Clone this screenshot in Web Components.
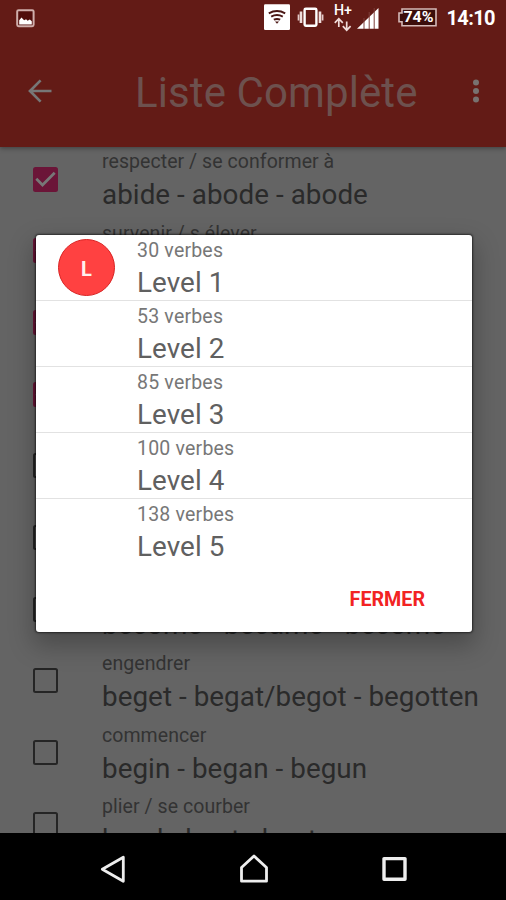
<!DOCTYPE html>
<html lang="fr">
<head>
<meta charset="utf-8">
<title>Liste Complète</title>
<style>
html,body{margin:0;height:900px;overflow:hidden;background:#000;font-family:Roboto,"Liberation Sans",sans-serif}
</style>
</head>
<body>
<verb-app></verb-app>
<script>
const define = (name, html, after) => {
  const t = document.createElement('template');
  t.innerHTML = html;
  customElements.define(name, class extends HTMLElement {
    constructor() {
      super();
      this.attachShadow({mode: 'open'}).append(t.content.cloneNode(true));
    }
    connectedCallback() { if (after) after(this, this.shadowRoot); }
  });
};

define('status-bar', `
<style>
:host{display:flex;height:36px;box-sizing:border-box;padding:0 9px 0 16px;color:#fff;align-items:center}
svg{display:block;flex:none}
.fill{flex:1}
</style>
<svg width="19" height="19" viewBox="0 0 19 19"><rect x="1.2" y="1.2" width="16.4" height="16" rx="1.4" fill="#500d0b" stroke="#cfaeab" stroke-width="2"/><path d="M3.200 15.500v-4.300l2.300-2.600 2.600 2.600 2-1 1.500 1.500 2.200-1.200 2 1.800v3.200z" fill="#fff"/></svg>
<span class="fill"></span>
<svg width="233" height="36" viewBox="264 0 233 36">
<rect x="264" y="4.300" width="26" height="25.700" rx="1.200" fill="#fff"/>
<g fill="none" stroke="#4a1714" stroke-width="2"><path d="M268.800 13.300Q277 8.800 285.200 13.300"/><path d="M271.200 16.600Q277 13.600 282.800 16.600"/><path d="M273.800 19.700Q277 18.200 280.200 19.700"/></g><path d="M275 21.500h4l-2 2.300z" fill="#4a1714"/>
<rect x="304.600" y="8.800" width="11.800" height="17" rx="1.200" fill="none" stroke="#fff" stroke-width="2.400"/>
<path d="M301 11.500v11.500M320 11.500v11.500" stroke="#f0dddb" stroke-width="2.600"/><path d="M298.500 14.500v6M322.600 14.500v6" stroke="#e2c9c7" stroke-width="1.700"/>
<text x="334" y="15" font-size="15" font-weight="500" fill="#fff" textLength="18" lengthAdjust="spacingAndGlyphs">H+</text>
<g fill="none" stroke="#f0dcda" stroke-width="1.700"><path d="M338.800 27V19M334.800 22.800L338.800 18.700L342.800 22.800M346.700 21.500V30M342.800 26.200L346.700 30.200L350.600 26.200"/></g>
<path d="M357 28.800L378.500 8v20.800z" fill="#fff"/><path d="M364 18v11M369.200 12v17M374.200 8v21" stroke="#7d3f3b" stroke-width="1"/>
<path d="M402 9h34v16.800h-34v-4h-3v-8.800h3z" fill="#3b0d0b" stroke="#d5bab8" stroke-width="1.600"/>
<text x="403.500" y="22.300" font-size="15" font-weight="700" fill="#fff" textLength="30" lengthAdjust="spacingAndGlyphs">74%</text>
<text x="446.500" y="25.200" font-size="20" font-weight="700" fill="#fff" textLength="49" lengthAdjust="spacing">14:10</text>
</svg>`);

define('app-bar', `
<style>
:host{display:flex;height:111px;align-items:center;color:#6d514e;padding:0 20px 0 27px;box-sizing:border-box}
svg{display:block;flex:none}
h1{flex:1;margin:2px 0 0 82px;font-weight:400;font-size:42px;line-height:50px;letter-spacing:.1px;white-space:nowrap}
</style>
<svg width="26" height="26" viewBox="0 0 26 26"><path d="M24.500 12H3.500M13.600 1.400L3 12L13.600 22.600" fill="none" stroke="#777" stroke-width="2.700"/></svg>
<h1><slot></slot></h1>
<svg width="20" height="26" viewBox="0 0 20 26"><g fill="#787270"><circle cx="10" cy="3.600" r="3"/><circle cx="10" cy="12.100" r="3"/><circle cx="10" cy="20.600" r="3"/></g></svg>`);

define('check-box', `
<style>
:host{display:block;width:25px;height:25px}
.b{box-sizing:border-box;width:25px;height:25px;border:2.500px solid #252525;border-radius:2.500px}
svg{display:none}
:host([on]) .b{display:none}
:host([on]) svg{display:block}
</style>
<div class="b"></div>
<svg width="25" height="25" viewBox="0 0 25 25"><rect width="25" height="25" rx="2.500" fill="#6b1538"/><path d="M3.300 11.800L9.500 18L21.700 5.700" fill="none" stroke="#777" stroke-width="2.700"/></svg>`);

define('verb-row', `
<style>
:host{display:grid;grid-template-columns:102px 1fr;height:71.700px;color:#2a2a2a;white-space:nowrap}
check-box{margin:19.500px 0 0 33px}
.s{font-size:19.500px;line-height:24px;margin-top:3px;letter-spacing:.06px;color:#333}
.m{font-size:27.800px;line-height:34px;margin-top:4px;letter-spacing:.05px}
</style>
<check-box></check-box>
<div><div class="s"><slot name="fr"></slot></div><div class="m"><slot></slot></div></div>`,
(el, r) => r.querySelector('check-box').toggleAttribute('on', el.hasAttribute('on')));

define('level-row', `
<style>
:host{display:grid;grid-template-columns:101px 1fr;height:66.100px;box-sizing:border-box;border-bottom:1.500px solid #e2e2e2;color:#666;white-space:nowrap}
:host([last]){border:0}
.a{padding:4px 0 0 22px}
.s{font-size:19.500px;line-height:24px;margin-top:4px;letter-spacing:.2px;color:#777}
.m{font-size:27.800px;line-height:34px;margin-top:2.700px;letter-spacing:.1px;color:#606060}
</style>
<div class="a"><slot name="avatar"></slot></div>
<div><div class="s"><slot name="count"></slot></div><div class="m"><slot></slot></div></div>`);

define('level-avatar', `
<style>
:host{display:flex;width:57px;height:57px;box-sizing:border-box;border:1.500px solid #d92323;border-radius:50%;background:#ff4141;color:#fff0ee;align-items:center;justify-content:center;font-weight:700;font-size:20px;padding-top:2px}
</style><slot></slot>`);

define('level-dialog', `
<style>
:host{display:flex;flex-direction:column;width:436px;height:397px;background:#fff;border-radius:3px;overflow:hidden;box-shadow:0 0 2px 1px rgba(0,0,0,.55),0 11px 24px 3px rgba(0,0,0,.25)}
.foot{flex:1;display:flex;justify-content:flex-end;align-items:flex-start;padding:22px 47px 0 0}
.btn{font-weight:700;font-size:19.700px;line-height:26px;color:#f22323}
</style>
<slot></slot>
<div class="foot"><span class="btn"><slot name="action"></slot></span></div>`);

define('nav-bar', `
<style>
:host{display:block;height:67px;background:#000}
svg{display:block}
</style>
<svg width="506" height="67" viewBox="0 833 506 67"><g fill="none" stroke="#eee" stroke-width="2.800" stroke-linejoin="round"><path d="M123.300 857.300V881.300L102.300 869.300z"/><path d="M241.500 881.200V867.500L254 856L266.500 867.500V881.200z"/><rect x="384" y="858.600" width="21" height="20.600" stroke-width="3.400"/></g></svg>`);

define('verb-app', `
<style>
:host{display:flex;flex-direction:column;position:relative;width:506px;height:900px;overflow:hidden;background:#646464}
header{background:#631b16;height:147px;flex:none;box-shadow:0 1px 5px rgba(0,0,0,.4);position:relative}
main{flex:1;min-height:0;overflow:hidden}
nav-bar{flex:none}
level-dialog{position:absolute;left:36px;top:235px}
</style>
<header><status-bar></status-bar><app-bar>Liste Complète</app-bar></header>
<main>
<verb-row on><span slot="fr">respecter / se conformer à</span>abide - abode - abode</verb-row>
<verb-row on><span slot="fr">survenir / s élever</span></verb-row>
<verb-row on></verb-row>
<verb-row on></verb-row>
<verb-row></verb-row>
<verb-row></verb-row>
<verb-row><span slot="fr">&nbsp;</span>become - became - become</verb-row>
<verb-row><span slot="fr">engendrer</span>beget - begat/begot - begotten</verb-row>
<verb-row><span slot="fr">commencer</span>begin - began - begun</verb-row>
<verb-row><span slot="fr">plier / se courber</span>bend - bent - bent</verb-row>
</main>
<nav-bar></nav-bar>
<level-dialog>
<level-row><level-avatar slot="avatar">L</level-avatar><span slot="count">30 verbes</span>Level 1</level-row>
<level-row><span slot="count">53 verbes</span>Level 2</level-row>
<level-row><span slot="count">85 verbes</span>Level 3</level-row>
<level-row><span slot="count">100 verbes</span>Level 4</level-row>
<level-row last><span slot="count">138 verbes</span>Level 5</level-row>
<span slot="action">FERMER</span>
</level-dialog>`);
</script>
</body>
</html>
